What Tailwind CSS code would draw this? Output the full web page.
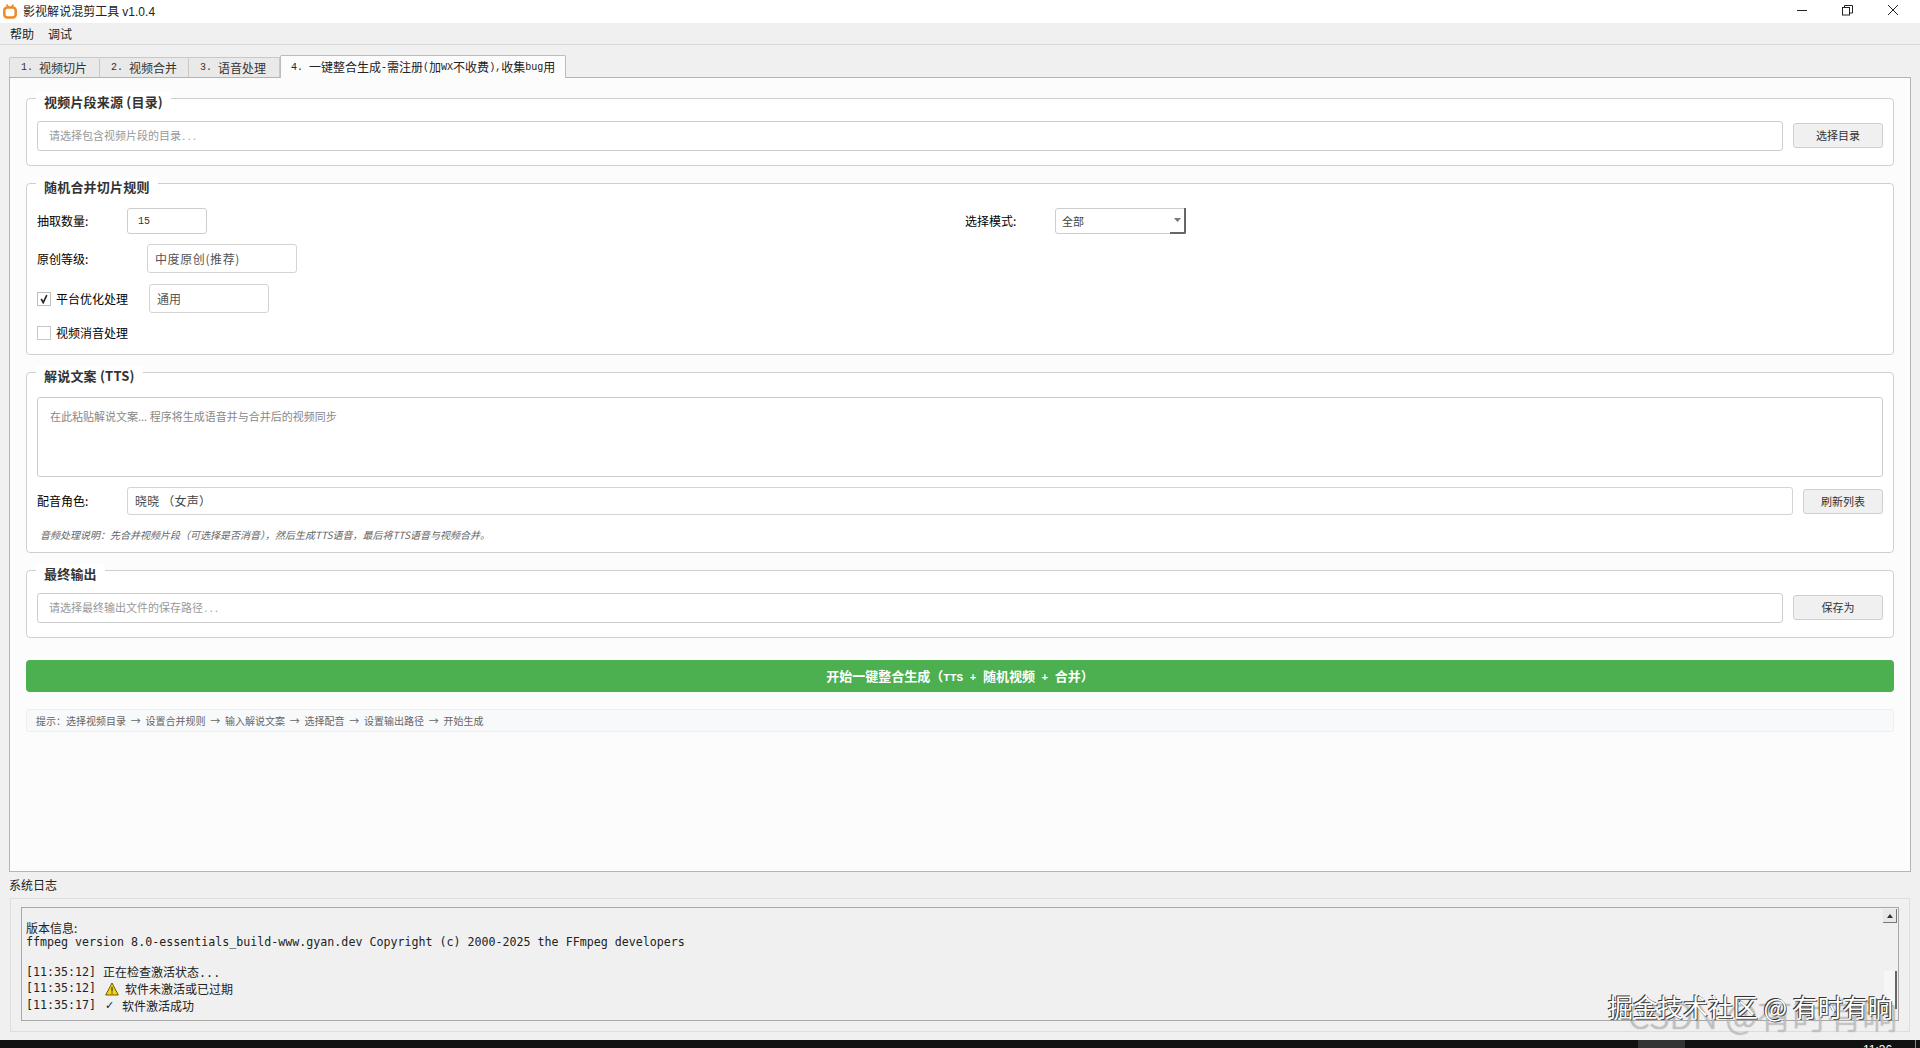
<!DOCTYPE html>
<html lang="zh-CN">
<head>
<meta charset="utf-8">
<title>影视解说混剪工具</title>
<script src="https://cdn.jsdelivr.net/npm/@tailwindcss/browser@4"></script>
</head>
<body class="w-[1920px] h-[1048px] overflow-hidden bg-[#f0f0f0] font-['Noto_Sans_CJK_SC','Liberation_Sans',sans-serif] text-[12px] text-black">
<div class="relative flex flex-col h-[1048px]">

  <!-- title bar -->
  <div class="h-[23px] bg-white flex items-center shrink-0">
    <svg class="ml-[3px] w-[14px] h-[15px]" viewBox="0 0 14 15" fill="none"><path d="M3.5 0.5 L5.5 3 M10.5 0.5 L8.5 3" stroke="#e8831f" stroke-width="1.3"/><rect x="1.3" y="3.6" width="11.4" height="10" rx="3" stroke="#ee8a22" stroke-width="2.5"/></svg>
    <span class="ml-[6px] text-[12px] leading-[23px] text-[#222] tracking-[0.05px]">影视解说混剪工具 <span class="font-['Liberation_Sans']">v1.0.4</span></span>
    <div class="ml-auto mr-[2px] flex items-center">
      <svg class="w-[46px] h-[23px]" viewBox="0 0 46 23"><path d="M17 10.5 H27" stroke="#222" stroke-width="1"/></svg>
      <svg class="w-[46px] h-[23px]" viewBox="0 0 46 23" fill="none" stroke="#222"><rect x="16.5" y="7.5" width="7" height="7.5"/><path d="M18.5 7.5 V5.5 H26.5 V13 H23.5"/></svg>
      <svg class="w-[46px] h-[23px]" viewBox="0 0 46 23" fill="none" stroke="#222"><path d="M16 5 L26 15 M26 5 L16 15"/></svg>
    </div>
  </div>

  <!-- menu bar -->
  <div class="h-[22px] flex items-center gap-[14px] pl-[10px] border-b border-[#d9d9d9] shrink-0 text-[12px] text-[#222]">
    <span>帮助</span><span>调试</span>
  </div>

  <!-- tabs -->
  <div class="h-[32px] flex items-end pl-[9px] shrink-0">
    <div class="w-[91px] h-[20px] bg-[#e9e9e9] border border-b-0 border-[#c8c8c8] rounded-t-[2px] flex items-center pl-[11px] text-[#333]"><span class="font-['Liberation_Mono'] text-[10px] whitespace-pre">1. </span>视频切片</div>
    <div class="w-[89px] h-[20px] bg-[#e9e9e9] border border-b-0 border-l-0 border-[#c8c8c8] flex items-center pl-[11px] text-[#333]"><span class="font-['Liberation_Mono'] text-[10px] whitespace-pre">2. </span>视频合并</div>
    <div class="w-[91px] h-[20px] bg-[#e9e9e9] border border-b-0 border-l-0 border-[#c8c8c8] flex items-center pl-[11px] text-[#333]"><span class="font-['Liberation_Mono'] text-[10px] whitespace-pre">3. </span>语音处理</div>
    <div class="relative z-10 w-[286px] h-[23px] -mb-px bg-[#fcfcfc] border border-b-0 border-[#bdbdbd] rounded-t-[2px] flex items-center pl-[10px] text-[#222] whitespace-nowrap"><span class="font-['Liberation_Mono'] text-[10px] whitespace-pre">4. </span>一键整合生成<span class="font-['Liberation_Mono'] text-[10px]">-</span>需注册<span class="font-['Liberation_Mono'] text-[10px]">(</span>加<span class="font-['Liberation_Mono'] text-[10px]">WX</span>不收费<span class="font-['Liberation_Mono'] text-[10px]">),</span>收集<span class="font-['Liberation_Mono'] text-[10px]">bug</span>用</div>
  </div>

  <!-- main panel -->
  <div class="ml-[9px] w-[1902px] h-[795px] shrink-0 bg-[#fcfcfc] border border-[#b4b4b4] pl-[16px] pr-[16px] pt-[20px] flex flex-col">

    <!-- group 1 -->
    <div class="relative h-[68px] bg-white border border-[#cfcfcf] rounded-[4px] pl-[10px] pr-[10px] flex items-center gap-[10px] shrink-0">
      <span class="absolute left-[9px] -top-[7px] bg-white px-[8px] text-[13px] leading-[20px] font-semibold tracking-[0.2px] text-[#333]">视频片段来源 (目录)</span>
      <div class="flex-1 h-[30px] mt-[7px] bg-white border border-[#cdcdcd] rounded-[3px] pl-[11px] pt-[2px] flex items-center text-[11px] text-[#999]"><span>请选择包含视频片段的目录<span class="font-['Liberation_Mono'] text-[9px]">...</span></span></div>
      <div class="w-[90px] h-[25px] mt-[7px] bg-[#f0f0f0] border border-[#d0d0d0] rounded-[3px] flex items-center justify-center text-[11px] text-[#333]">选择目录</div>
    </div>

    <!-- group 2 -->
    <div class="relative h-[172px] mt-[17px] bg-white border border-[#cfcfcf] rounded-[4px] pl-[10px] pt-[24px] flex flex-col shrink-0">
      <span class="absolute left-[9px] -top-[7px] bg-white px-[8px] text-[13px] leading-[20px] font-semibold tracking-[0.2px] text-[#333]">随机合并切片规则</span>
      <div class="flex items-center h-[26px]">
        <span class="w-[90px]">抽取数量:</span>
        <div class="w-[80px] h-[26px] border border-[#cdcdcd] rounded-[3px] pl-[10px] flex items-center font-['Liberation_Mono'] text-[10px] text-[#333]">15</div>
        <span class="ml-[758px] w-[90px]">选择模式:</span>
        <div class="relative w-[131px] h-[26px] border border-[#cdcdcd] rounded-[3px] pl-[6px] flex items-center text-[11px] text-[#444]">全部
          <div class="absolute -right-px -top-px -bottom-px w-[16px] border-r-2 border-b-2 border-[#666] rounded-br-[2px] flex items-center justify-center">
            <svg class="w-[7px] h-[4px]" viewBox="0 0 7 4"><path d="M0 0 H7 L3.5 4 Z" fill="#777"/></svg>
          </div>
        </div>
      </div>
      <div class="flex items-center h-[29px] mt-[10px]">
        <span class="w-[110px]">原创等级:</span>
        <div class="w-[150px] h-[29px] border border-[#d4d4d4] rounded-[3px] pl-[7px] flex items-center text-[#555] tracking-[0.6px]">中度原创(推荐)</div>
      </div>
      <div class="flex items-center h-[29px] mt-[11px]">
        <span class="w-[14px] h-[14px] border border-[#bdbdbd] bg-white flex items-center justify-center">
          <svg class="w-[10px] h-[10px]" viewBox="0 0 10 10" fill="none"><path d="M2.2 4.8 L4.2 8.6 L7.8 1.2" stroke="#222" stroke-width="1.6"/></svg>
        </span>
        <span class="ml-[5px] w-[93px]">平台优化处理</span>
        <div class="w-[120px] h-[29px] border border-[#d4d4d4] rounded-[3px] pl-[7px] flex items-center text-[#555]">通用</div>
      </div>
      <div class="flex items-center h-[14px] mt-[13px]">
        <span class="w-[14px] h-[14px] border border-[#c8c8c8] bg-white"></span>
        <span class="ml-[5px]">视频消音处理</span>
      </div>
    </div>

    <!-- group 3 -->
    <div class="relative h-[181px] mt-[17px] bg-white border border-[#cfcfcf] rounded-[4px] pl-[10px] pr-[10px] pt-[24px] flex flex-col shrink-0">
      <span class="absolute left-[9px] -top-[7px] bg-white px-[8px] text-[13px] leading-[20px] font-semibold tracking-[0.2px] text-[#333]">解说文案 (TTS)</span>
      <div class="h-[80px] border border-[#cdcdcd] rounded-[3px] pl-[12px] pt-[10px] text-[11px] leading-[16px] text-[#888]">在此粘贴解说文案... 程序将生成语音并与合并后的视频同步</div>
      <div class="flex items-center h-[28px] mt-[10px]">
        <span class="w-[90px] shrink-0">配音角色:</span>
        <div class="flex-1 h-[28px] border border-[#d4d4d4] rounded-[3px] pl-[7px] flex items-center text-[#444] tracking-[0.2px]">晓晓 （女声）</div>
        <div class="ml-[10px] w-[80px] h-[25px] bg-[#f0f0f0] border border-[#d0d0d0] rounded-[3px] flex items-center justify-center text-[11px] text-[#333]">刷新列表</div>
      </div>
      <div class="pl-[3px] mt-[13px] text-[10px] leading-[14px] italic text-[#666]">音频处理说明：先合并视频片段（可选择是否消音），然后生成TTS语音，最后将TTS语音与视频合并。</div>
    </div>

    <!-- group 4 -->
    <div class="relative h-[68px] mt-[17px] bg-white border border-[#cfcfcf] rounded-[4px] pl-[10px] pr-[10px] flex items-center gap-[10px] shrink-0">
      <span class="absolute left-[9px] -top-[7px] bg-white px-[8px] text-[13px] leading-[20px] font-semibold tracking-[0.2px] text-[#333]">最终输出</span>
      <div class="flex-1 h-[30px] mt-[7px] bg-white border border-[#cdcdcd] rounded-[3px] pl-[11px] pt-[2px] flex items-center text-[11px] text-[#999]"><span>请选择最终输出文件的保存路径<span class="font-['Liberation_Mono'] text-[9px]">...</span></span></div>
      <div class="w-[90px] h-[25px] mt-[7px] bg-[#f0f0f0] border border-[#d0d0d0] rounded-[3px] flex items-center justify-center text-[11px] text-[#333]">保存为</div>
    </div>

    <!-- start button -->
    <div class="h-[32px] mt-[22px] bg-[#4caf50] rounded-[4px] flex items-center justify-center text-white font-bold text-[13px] whitespace-pre shrink-0"><span>开始一键整合生成（<span class="font-['Liberation_Mono'] text-[11px]">TTS + </span>随机视频<span class="font-['Liberation_Mono'] text-[11px]"> + </span>合并）</span></div>

    <!-- tip -->
    <div class="h-[23px] mt-[17px] bg-[#f8f9fa] border border-[#eceff1] rounded-[3px] pl-[9px] flex items-center text-[10px] text-[#666] [word-spacing:2.5px] shrink-0">提示：选择视频目录 → 设置合并规则 → 输入解说文案 → 选择配音 → 设置输出路径 → 开始生成</div>
  </div>

  <!-- log -->
  <div class="h-[26px] pl-[9px] flex items-center text-[12px] text-[#222] shrink-0">系统日志</div>
  <div class="ml-[10px] w-[1900px] h-[134px] border border-[#dedede] pl-[10px] pt-[8px] shrink-0">
    <div class="relative w-[1878px] h-[114px] border border-[#a8a8a8] pl-[4px] pt-[12px] text-[#222] overflow-hidden">
      <div class="h-[15px] leading-[15px] text-[12px]">版本信息:</div>
      <div class="h-[15px] leading-[15px] font-['DejaVu_Sans_Mono'] text-[11.65px] whitespace-pre">ffmpeg version 8.0-essentials_build-www.gyan.dev Copyright (c) 2000-2025 the FFmpeg developers</div>
      <div class="h-[14px]"></div>
      <div class="h-[16px] leading-[16px] flex items-center whitespace-pre"><span class="font-['DejaVu_Sans_Mono'] text-[11.65px]">[11:35:12] </span><span>正在检查激活状态<span class="font-['DejaVu_Sans_Mono'] text-[11.65px]">...</span></span></div>
      <div class="h-[17px] leading-[17px] flex items-center whitespace-pre"><span class="font-['DejaVu_Sans_Mono'] text-[11.65px]">[11:35:12] </span><svg class="ml-[2px] w-[14px] h-[14px] mr-[6px]" viewBox="0 0 14 14"><path d="M7 1 L13.3 13 H0.7 Z" fill="#f4d312" stroke="#6b5a00" stroke-width="1"/><path d="M7 5 V9.5 M7 10.5 V11.7" stroke="#333" stroke-width="1.2"/></svg><span>软件未激活或已过期</span></div>
      <div class="h-[17px] leading-[17px] flex items-center whitespace-pre"><span class="font-['DejaVu_Sans_Mono'] text-[11.65px]">[11:35:17] </span><span class="ml-[2px] w-[17px] font-['DejaVu_Sans'] text-[11px]">✓</span><span>软件激活成功</span></div>

      <!-- scrollbar -->
      <div class="absolute right-0 top-0 bottom-0 w-[15px] pt-[1px] flex flex-col">
        <div class="w-[14px] h-[14px] bg-[#e8e8e8] border-r border-b border-[#777] flex items-center justify-center">
          <svg class="w-[6px] h-[4px]" viewBox="0 0 6 4"><path d="M0 4 H6 L3 0 Z" fill="#333"/></svg>
        </div>
        <div class="w-[13px] h-[38px] mt-[48px] ml-px bg-[#f6f6f6] border-r-2 border-[#666]"></div>
      </div>
    </div>
  </div>
  <div class="h-[9px]"></div>

  <!-- taskbar sliver -->
  <div class="h-[8px] bg-[#111] relative overflow-hidden shrink-0">
    <div class="absolute left-[1638px] top-0 w-[47px] h-[8px] bg-[#333]"></div>
    <span class="absolute left-[1863px] top-[3px] text-[12px] leading-[14px] text-white font-['Liberation_Sans']">11:36</span>
    <div class="absolute left-[1915px] top-0 w-px h-[8px] bg-[#888]"></div>
  </div>

  <!-- watermarks -->
  <span class="absolute left-[1628px] top-[994px] text-[35px] leading-[40px] text-white/50 whitespace-nowrap [text-shadow:0_0_1px_#777] font-light">CSDN @有时有晌</span>
  <span class="absolute left-[1608px] top-[991px] text-[25px] leading-[30px] text-white whitespace-nowrap [text-shadow:-1px_-1px_0_#333,1px_1px_0_#555]">掘金技术社区 @ 有时有晌</span>
</div>
</body>
</html>
